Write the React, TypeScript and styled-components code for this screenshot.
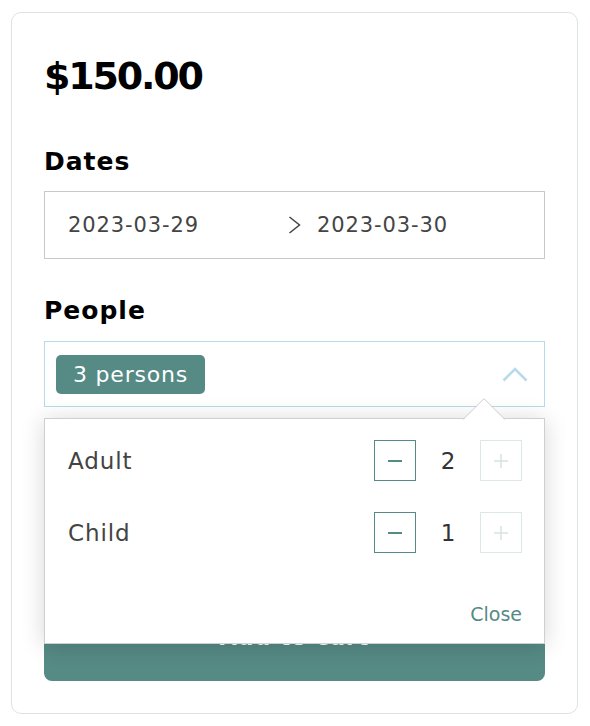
import React, { useState } from "react";
import styled, { createGlobalStyle } from "styled-components";

const teal = "#568a85";
const font = `"DejaVu Sans", Verdana, sans-serif`;

const GlobalStyle = createGlobalStyle`
  body {
    margin: 0;
    background: #fff;
    font-family: ${font};
  }
`;

const Card = styled.div`
  margin: 12px 0 0 11px;
  width: 567px;
  height: 702px;
  box-sizing: border-box;
  border: 1px solid #dde3e3;
  border-radius: 10px;
  padding: 32px;
  display: flex;
  flex-direction: column;
`;

const Price = styled.div`
  margin-top: 3px;
  font-size: 38px;
  font-weight: 700;
  line-height: 56px;
  letter-spacing: -2.2px;
  color: #000;
`;

const SectionTitle = styled.h2<{ $gap: number }>`
  margin: ${(p) => p.$gap}px 0 0;
  font-size: 25px;
  font-weight: 700;
  line-height: 32px;
  letter-spacing: 1px;
  color: #000;
`;

const DateBox = styled.div`
  margin-top: 13px;
  height: 68px;
  box-sizing: border-box;
  border: 1px solid #c9c9c9;
  display: grid;
  grid-template-columns: 1fr 13px 1fr;
  align-items: center;
  padding: 0 23px;
  font-size: 21px;
  color: #444;
  letter-spacing: 0.9px;
`;

const DateValue = styled.span<{ $end?: boolean }>`
  line-height: 24px;
  padding-left: ${(p) => (p.$end ? "16px" : "0")};
`;

const PeopleField = styled.div`
  position: relative;
  margin-top: 14px;
`;

const SelectBox = styled.div`
  height: 66px;
  box-sizing: border-box;
  border: 1px solid #b7dbea;
  display: flex;
  align-items: center;
  justify-content: space-between;
  padding: 0 16px 0 11px;
`;

const Tag = styled.span`
  height: 39px;
  display: flex;
  align-items: center;
  padding: 0 17px;
  border-radius: 5px;
  background: ${teal};
  color: #fff;
  font-size: 22px;
  letter-spacing: 0.8px;
`;

const Popover = styled.div`
  position: absolute;
  top: 77px;
  left: 0;
  right: 0;
  height: 226px;
  box-sizing: border-box;
  background: #fff;
  border: 1px solid #cfcfcf;
  box-shadow: 0 2px 22px rgba(0, 0, 0, 0.16);
  padding: 21px 22px 18px 23px;
  display: flex;
  flex-direction: column;
  z-index: 2;
`;

const Arrow = styled.svg`
  position: absolute;
  top: -21px;
  left: 418px;
`;

const CounterRow = styled.div`
  display: flex;
  align-items: center;
  justify-content: space-between;
  height: 41px;
  margin-bottom: 31px;
`;

const CounterLabel = styled.span`
  font-size: 23px;
  color: #444;
  letter-spacing: 0.9px;
`;

const Stepper = styled.div`
  display: flex;
  align-items: center;
`;

const StepButton = styled.button<{ $enabled: boolean }>`
  width: 42px;
  height: 41px;
  padding: 0;
  box-sizing: border-box;
  background: #fff;
  border: 1px solid ${(p) => (p.$enabled ? teal : "#dde7e6")};
  display: flex;
  align-items: center;
  justify-content: center;
  cursor: ${(p) => (p.$enabled ? "pointer" : "default")};
`;

const Count = styled.span`
  width: 64px;
  text-align: center;
  font-size: 23px;
  color: #333;
`;

const CloseLink = styled.button`
  margin-top: auto;
  align-self: flex-end;
  padding: 0;
  border: none;
  background: none;
  font-family: ${font};
  font-size: 19px;
  line-height: 22px;
  color: ${teal};
  cursor: pointer;
`;

const AddButton = styled.button`
  margin-top: auto;
  height: 80px;
  padding: 0 0 8px;
  border: none;
  border-radius: 8px;
  background: ${teal};
  color: #fff;
  font-family: ${font};
  font-size: 22px;
  font-weight: 700;
  letter-spacing: 1px;
`;

const Minus = ({ color }: { color: string }) => (
  <svg width="14" height="4" viewBox="0 0 14 4">
    <line x1="0" y1="2" x2="14" y2="2" stroke={color} strokeWidth="2" />
  </svg>
);

const Plus = ({ color }: { color: string }) => (
  <svg width="14" height="14" viewBox="0 0 14 14">
    <line x1="0" y1="7" x2="14" y2="7" stroke={color} strokeWidth="1.6" />
    <line x1="7" y1="0" x2="7" y2="14" stroke={color} strokeWidth="1.6" />
  </svg>
);

const App: React.FC = () => {
  const [adults, setAdults] = useState(2);
  const [children, setChildren] = useState(1);
  const [open, setOpen] = useState(true);

  const rows = [
    { label: "Adult", value: adults, set: setAdults },
    { label: "Child", value: children, set: setChildren },
  ];

  return (
    <>
      <GlobalStyle />
      <Card>
        <Price>$150.00</Price>

        <SectionTitle $gap={42}>Dates</SectionTitle>
        <DateBox>
          <DateValue>2023-03-29</DateValue>
          <svg width="13" height="18" viewBox="0 0 13 18">
            <polyline
              points="1.5,1 11.5,9 1.5,17"
              fill="none"
              stroke="#444"
              strokeWidth="1.5"
            />
          </svg>
          <DateValue $end>2023-03-30</DateValue>
        </DateBox>

        <SectionTitle $gap={36}>People</SectionTitle>
        <PeopleField>
          <SelectBox onClick={() => setOpen(!open)}>
            <Tag>{adults + children} persons</Tag>
            <svg width="26" height="15" viewBox="0 0 26 15">
              <polyline
                points="1.5,13.5 13,2 24.5,13.5"
                fill="none"
                stroke="#b7dbea"
                strokeWidth="2.6"
              />
            </svg>
          </SelectBox>
          {open && (
            <Popover>
              <Arrow width="42" height="22" viewBox="0 0 42 22">
                <polygon points="0,22 21,1 42,22" fill="#fff" />
                <polyline
                  points="0,21.5 21,0.7 42,21.5"
                  fill="none"
                  stroke="#cfcfcf"
                  strokeWidth="1"
                />
              </Arrow>
              {rows.map((row) => (
                <CounterRow key={row.label}>
                  <CounterLabel>{row.label}</CounterLabel>
                  <Stepper>
                    <StepButton
                      $enabled
                      onClick={() => row.set(Math.max(0, row.value - 1))}
                    >
                      <Minus color={teal} />
                    </StepButton>
                    <Count>{row.value}</Count>
                    <StepButton $enabled={false}>
                      <Plus color="#d8e5e3" />
                    </StepButton>
                  </Stepper>
                </CounterRow>
              ))}
              <CloseLink onClick={() => setOpen(false)}>Close</CloseLink>
            </Popover>
          )}
        </PeopleField>

        <AddButton>Add to cart</AddButton>
      </Card>
    </>
  );
};

export default App;
